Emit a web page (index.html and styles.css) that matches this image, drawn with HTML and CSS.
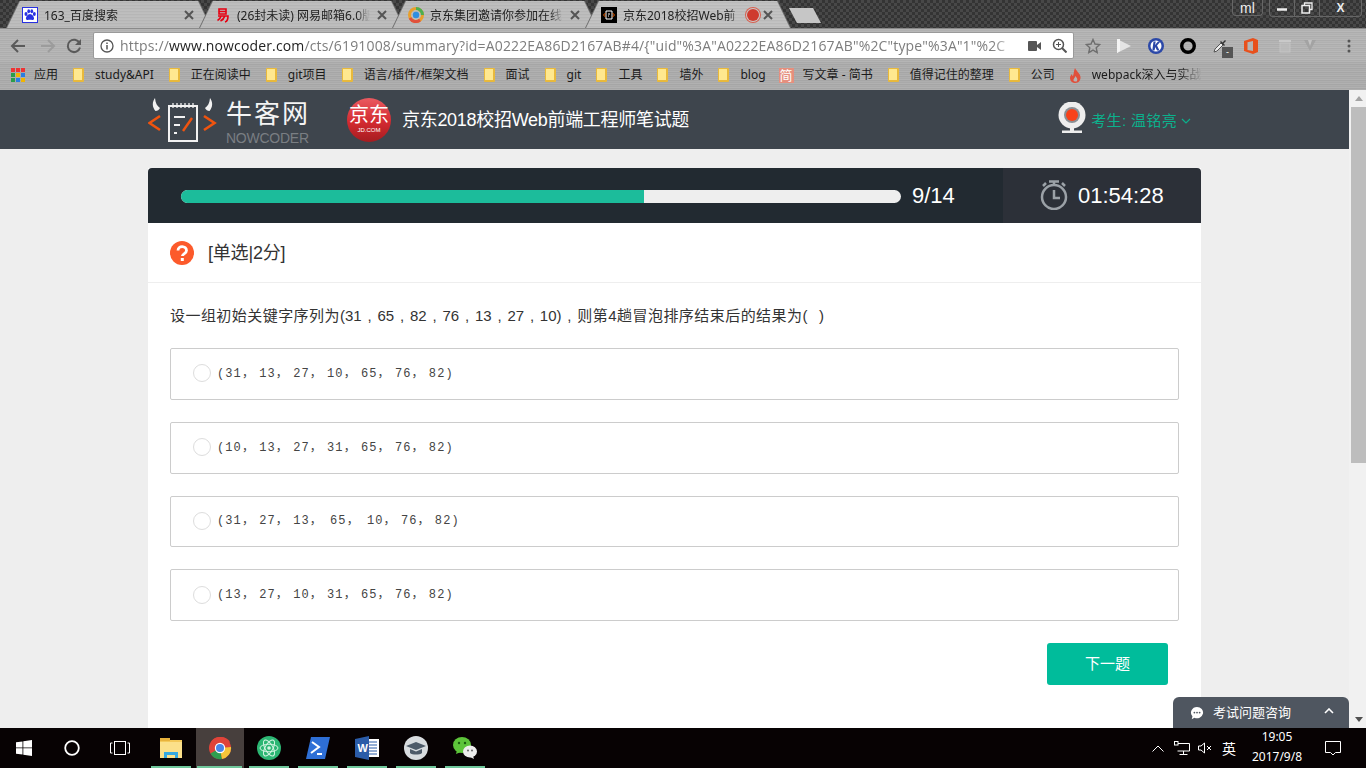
FILE: index.html
```html
<!DOCTYPE html>
<html lang="zh-CN">
<head>
<meta charset="utf-8">
<title>京东2018校招Web前端工程师笔试题</title>
<link rel="stylesheet" href="styles.css">
</head>
<body>
<div class="strip">
  <div class="tab"><div class="tab-in">
    <svg class="fav" viewBox="0 0 16 16"><rect x=".5" y=".5" width="15" height="15" fill="#fff" stroke="#2932e1"/><g fill="#2932e1"><ellipse cx="4" cy="7" rx="1.5" ry="2"/><ellipse cx="6.7" cy="4.3" rx="1.4" ry="2"/><ellipse cx="9.8" cy="4.3" rx="1.4" ry="2"/><ellipse cx="12.3" cy="7" rx="1.5" ry="2"/><path d="M8 7c2 0 4.500 3 4 5-.5 1.500-2.500.8-4 .8s-3.500.7-4-.8c-.5-2 2-5 4-5z"/></g></svg>
    <span class="tab-text">163_百度搜索</span>
    <svg class="tab-x" viewBox="0 0 10 10"><path d="M1 1l8 8M9 1l-8 8" stroke="#555" stroke-width="2"/></svg>
  </div></div>
  <div class="tab"><div class="tab-in">
    <svg class="fav" viewBox="0 0 16 16"><g fill="none" stroke="#e60012" stroke-width="1.600"><path d="M4 2h7v5H4zM4 4.500h7M3 9h10c0 3-1 5.500-3 6M6 9c-.5 2-1.500 3.500-3.500 4.500M9.500 9.500c-.5 2-2 3.500-4 4.500"/></g></svg>
    <span class="tab-text">(26封未读) 网易邮箱6.0版</span>
    <svg class="tab-x" viewBox="0 0 10 10"><path d="M1 1l8 8M9 1l-8 8" stroke="#555" stroke-width="2"/></svg>
  </div></div>
  <div class="tab"><div class="tab-in">
    <svg class="fav" viewBox="0 0 16 16"><circle cx="8" cy="8" r="6.500" fill="none" stroke="#e8a02c" stroke-width="3"/><path d="M8 1.500A6.500 6.500 0 0 1 14.500 8" fill="none" stroke="#4caf50" stroke-width="3"/><path d="M2 11a6.500 6.500 0 0 0 10 2" fill="none" stroke="#e0503c" stroke-width="3"/><circle cx="8" cy="8" r="3.200" fill="#2f8fe0"/></svg>
    <span class="tab-text">京东集团邀请你参加在线</span>
    <svg class="tab-x" viewBox="0 0 10 10"><path d="M1 1l8 8M9 1l-8 8" stroke="#555" stroke-width="2"/></svg>
  </div></div>
  <div class="tab tab-active"><div class="tab-in">
    <svg class="fav" viewBox="0 0 16 16"><rect width="16" height="16"/><path d="M5 4h6v8H5z" fill="none" stroke="#fff"/><path d="M2.500 8l2-2M2.500 8l2 2M13.500 8l-2-2M13.500 8l-2 2" stroke="#f60" fill="none"/><path d="M7 7h2M7 9h1" stroke="#fff"/></svg>
    <span class="tab-text">京东2018校招Web前</span>
    <span class="rec"></span>
    <svg class="tab-x" viewBox="0 0 10 10"><path d="M1 1l8 8M9 1l-8 8" stroke="#555" stroke-width="2"/></svg>
  </div></div>
  <div class="new-tab"></div>
  <div class="win">
    <span class="win-user">ml</span>
    <span class="win-btns">
      <span class="win-b"><svg viewBox="0 0 12 12" width="12" height="12"><path d="M1 7.500h10" stroke="#eee" stroke-width="2.500"/></svg></span>
      <span class="win-b"><svg viewBox="0 0 12 12" width="12" height="12"><path d="M3.500 3V1h7.500v6.500H9" fill="none" stroke="#eee" stroke-width="1.300"/><rect x="1" y="3.500" width="7.500" height="7.500" fill="none" stroke="#eee" stroke-width="1.500"/></svg></span>
      <span class="win-b win-close">X</span>
    </span>
  </div>
</div>

<div class="toolbar">
  <svg class="nav" viewBox="0 0 16 16"><path d="M15 8H2M8 2L2 8l6 6" fill="none" stroke="#5a5a5a" stroke-width="2"/></svg>
  <svg class="nav nav-off" viewBox="0 0 16 16"><path d="M1 8h13M8 2l6 6-6 6" fill="none" stroke="#9c9c9c" stroke-width="2"/></svg>
  <svg class="nav" viewBox="0 0 16 16"><path d="M13.500 5A6.200 6.200 0 1 0 14 9.500" fill="none" stroke="#5a5a5a" stroke-width="2"/><path d="M15 1v6H9z" fill="#5a5a5a"/></svg>
  <div class="omni">
    <svg class="omni-info" viewBox="0 0 14 14"><circle cx="7" cy="7" r="6" fill="none" stroke="#555" stroke-width="1.300"/><path d="M7 6v4.500M7 3.500v1.500" stroke="#555" stroke-width="1.500"/></svg>
    <span class="url"><span class="url-dim">https://</span><span class="url-host">www.nowcoder.com</span><span class="url-dim">/cts/6191008/summary?id=A0222EA86D2167AB#4/{"uid"%3A"A0222EA86D2167AB"%2C"type"%3A"1"%2C</span></span>
    <svg class="omni-cam" viewBox="0 0 13 10"><rect width="9" height="10" rx="1" fill="#555"/><path d="M9 4l4-3v8L9 6z" fill="#555"/></svg>
    <svg class="omni-zoom" viewBox="0 0 15 15"><circle cx="6.500" cy="6.500" r="5" fill="none" stroke="#555" stroke-width="1.500"/><path d="M10 10l4.500 4.500" stroke="#555" stroke-width="2"/><path d="M4 6.500h5M6.500 4v5" stroke="#555"/></svg>
  </div>
  <div class="ext">
    <svg class="e-star" viewBox="0 0 16 16"><path d="M8 1.500l2 4.500 4.800.5-3.600 3.200 1 4.800L8 12.100l-4.200 2.400 1-4.800L1.200 6.500 6 6z" fill="none" stroke="#6e6e6e" stroke-width="1.400"/></svg>
    <svg class="e-16" viewBox="0 0 16 16"><path d="M1 1l14 7-14 7z" fill="#e4e4e4"/><path d="M1 1h3v12l-3 2z" fill="#f4f4f4"/></svg>
    <svg class="e-16" viewBox="0 0 16 16"><circle cx="8" cy="8" r="8" fill="#2b48a8"/><circle cx="8" cy="8" r="5.500" fill="#fff"/><path d="M5.500 3.500h2.200L7 7l3-3.500h2.500L9 7.500l2.500 5H9L7.300 9l-.8 3.500H4.300z" fill="#2b48a8"/></svg>
    <svg class="e-16" viewBox="0 0 16 16"><circle cx="8" cy="8" r="6.300" fill="none" stroke="#000" stroke-width="3.400"/></svg>
    <span class="e-drop"><svg class="e-16" viewBox="0 0 16 16"><path d="M2 14l1-3 6-6 2 2-6 6z" fill="#eee" stroke="#555"/><path d="M9 3l1.500 1.500L13 2l1 1-2.500 2.500L13 7l-1 1-4-4z" fill="#333"/></svg><span class="badge">-</span></span>
    <svg class="e-off" viewBox="0 0 14 16"><path d="M0 3l9-3 5 2v12l-5 2-9-3z" fill="#e8501c"/><path d="M3.500 4.200L9 3v10l-5.500-1z" fill="#b4b4b4"/></svg>
    <svg class="e-16 e-dim" viewBox="0 0 16 16"><rect x="2" y="2" width="12" height="2" fill="#d0d0d0"/><rect x="3" y="5" width="10" height="9" fill="#bdbdbd" stroke="#c8c8c8"/></svg>
    <svg class="e-16 e-dim" viewBox="0 0 16 16"><path d="M2 2h12L8 13z" fill="#a0a0a0"/><path d="M6 2h4L8 8z" fill="#c8c8c8"/></svg>
    <svg class="e-menu" viewBox="0 0 4 14"><circle cx="2" cy="2" r="1.500" fill="#555"/><circle cx="2" cy="7" r="1.500" fill="#555"/><circle cx="2" cy="12" r="1.500" fill="#555"/></svg>
  </div>
</div>

<div class="bookmarks">
  <span class="bm"><svg class="bm-apps" viewBox="0 0 14 14"><g><rect width="4" height="4" fill="#e33"/><rect x="5" width="4" height="4" fill="#e33"/><rect x="10" width="4" height="4" fill="#e33"/><rect y="5" width="4" height="4" fill="#2a9d4b"/><rect x="5" y="5" width="4" height="4" fill="#f0b400"/><rect x="10" y="5" width="4" height="4" fill="#2b7de0"/><rect y="10" width="4" height="4" fill="#2a9d4b"/><rect x="5" y="10" width="4" height="4" fill="#2b7de0"/><rect x="10" y="10" width="4" height="4" fill="#f0b400"/></g></svg>应用</span>
  <span class="bm"><span class="folder"></span>study&amp;API</span>
  <span class="bm"><span class="folder"></span>正在阅读中</span>
  <span class="bm"><span class="folder"></span>git项目</span>
  <span class="bm"><span class="folder"></span>语言/插件/框架文档</span>
  <span class="bm"><span class="folder"></span>面试</span>
  <span class="bm"><span class="folder"></span>git</span>
  <span class="bm"><span class="folder"></span>工具</span>
  <span class="bm"><span class="folder"></span>墙外</span>
  <span class="bm"><span class="folder"></span>blog</span>
  <span class="bm bm-js"><span class="jian">简</span>写文章 - 简书</span>
  <span class="bm"><span class="folder"></span>值得记住的整理</span>
  <span class="bm"><span class="folder"></span>公司</span>
  <span class="bm"><svg class="bm-flame" viewBox="0 0 11 15"><path d="M5 0c1 3 5 5 5.500 9 .3 3-2 6-5 6s-5.500-2-5.500-5c0-2 1-3 2-4 0 1 .5 2 1 2C4 6 3.500 3 5 0z" fill="#e0503c"/><path d="M5.500 8c1 1.500 2.500 3 1.500 5-.5.800-3 .8-3.500-.5C3 11 5 10 5.500 8z" fill="#b4b4b4"/></svg><span class="bm-fade">webpack深入与实战</span></span>
</div>

<div class="main">
  <div class="page">
    <header class="site">
      <div class="site-in">
        <svg class="logo" viewBox="0 0 70 50"><path d="M12 19L1.500 26 12 33M56 19l10.500 7L56 33" fill="none" stroke="#f0540f" stroke-width="2.600"/><path d="M7 1C4 5 4 10 7.500 14c2 0 3.500-1 4.500-3C9 9 7.500 6 7 1zM62 1c3 4 3 9-.5 13-2 0-3.500-1-4.500-3 3-2 4.500-5 5-10z" fill="#f2f2f2"/><rect x="21" y="9" width="28" height="35" fill="none" stroke="#f2f2f2" stroke-width="2"/><path d="M25 6v5M29 6v5M33 6v5M37 6v5M41 6v5M45 6v5" stroke="#f2f2f2" stroke-width="1.300"/><path d="M26 20h11M26 28h6M26 36h3" stroke="#f2f2f2" stroke-width="2"/><path d="M35 34l9-13" stroke="#f0540f" stroke-width="2.400"/></svg>
        <div class="brand"><span class="brand-cn">牛客网</span><span class="brand-en">NOWCODER</span></div>
        <div class="jd"><span class="jd-cn">京东</span><span class="jd-en">JD.COM</span></div>
        <h1 class="exam-title">京东2018校招Web前端工程师笔试题</h1>
        <div class="user">
          <svg class="cam" viewBox="0 0 28 32"><circle cx="14" cy="13" r="13.500" fill="#eee"/><circle cx="14" cy="13" r="8" fill="#8a8f94"/><circle cx="14" cy="13" r="6" fill="#f8421a"/><path d="M14 25v4" stroke="#eee" stroke-width="4"/><rect x="4" y="28.500" width="20" height="2.500" fill="#eee"/></svg>
          <span class="user-name">考生: 温铭亮</span>
          <svg class="chev" viewBox="0 0 10 6"><path d="M1 1l4 4 4-4" fill="none" stroke="#0cb08c" stroke-width="1.200"/></svg>
        </div>
      </div>
    </header>

    <section class="card">
      <div class="card-top">
        <div class="prog-wrap">
          <div class="prog"><div class="prog-fill"></div></div>
          <span class="prog-num">9/14</span>
        </div>
        <div class="timer">
          <svg class="clock" viewBox="0 0 28 30"><circle cx="14" cy="17" r="12" fill="none" stroke="#9ba1a7" stroke-width="2.500"/><path d="M14 10v8h6" fill="none" stroke="#9ba1a7" stroke-width="2.500"/><path d="M9 1.500h10M14 1.500v4M3 6l3-3M25 6l-3-3" stroke="#9ba1a7" stroke-width="2.500"/></svg>
          <span class="time">01:54:28</span>
        </div>
      </div>
      <div class="q-head">
        <svg class="q-icon" viewBox="0 0 24 24"><circle cx="12" cy="12" r="12" fill="#fc5a2b"/><path d="M8 9.500c0-5.500 8.500-5 8.500 0 0 3-4 3-4 5.500" fill="none" stroke="#fff" stroke-width="2.800"/><rect x="10.800" y="17" width="3" height="3" fill="#fff"/></svg>
        <span class="q-type">[单选|2分]</span>
      </div>
      <p class="q-text"><span class="cn">设一组初始关键字序列为</span>(31 , 65 , 82 , 76 , 13 , 27 , 10) , <span class="cn">则第4趟冒泡排序结束后的结果为</span>(&nbsp;&nbsp;)</p>
      <div class="opts">
        <div class="opt"><span class="radio"></span><span class="opt-text">(31<i>，</i>13<i>，</i>27<i>，</i>10<i>，</i>65<i>，</i>76<i>，</i>82)</span></div>
        <div class="opt"><span class="radio"></span><span class="opt-text">(10<i>，</i>13<i>，</i>27<i>，</i>31<i>，</i>65<i>，</i>76<i>，</i>82)</span></div>
        <div class="opt"><span class="radio"></span><span class="opt-text">(31<i>，</i>27<i>，</i>13<i class="wide">，</i>65<i class="wide">，</i>10<i>，</i>76<i>，</i>82)</span></div>
        <div class="opt"><span class="radio"></span><span class="opt-text">(13<i>，</i>27<i>，</i>10<i>，</i>31<i>，</i>65<i>，</i>76<i>，</i>82)</span></div>
      </div>
      <div class="actions"><button class="next"><span class="next-label">下一题</span></button></div>
    </section>
  </div>
  <div class="scrollbar">
    <span class="sb-up"></span>
    <span class="sb-thumb"></span>
    <span class="sb-track"></span>
    <span class="sb-down"></span>
  </div>
  <div class="consult">
    <svg class="consult-ic" viewBox="0 0 16 16"><path d="M8 1a7 6.500 0 1 1-3 12.400L2 15l.8-3.300A7 6.500 0 0 1 8 1z" fill="#fff"/><circle cx="5" cy="7.500" r="1" fill="#4f5660"/><circle cx="8" cy="7.500" r="1" fill="#4f5660"/><circle cx="11" cy="7.500" r="1" fill="#4f5660"/></svg>
    <span class="consult-text">考试问题咨询</span>
    <svg class="consult-up" viewBox="0 0 10 6"><path d="M1 5l4-4 4 4" fill="none" stroke="#fff" stroke-width="1.600"/></svg>
  </div>
</div>

<footer class="taskbar">
  <div class="tb-sys"><svg class="ic-win" viewBox="0 0 16 16"><path d="M0 2.300L6.500 1.400V7.500H0zM7.300 1.300L16 0V7.500H7.300zM0 8.300H6.500V14.500L0 13.700zM7.300 8.300H16V16L7.300 14.700z" fill="#fff"/></svg></div>
  <div class="tb-sys"><svg class="ic-16" viewBox="0 0 16 16"><circle cx="8" cy="8" r="6.800" fill="none" stroke="#fff" stroke-width="1.800"/></svg></div>
  <div class="tb-sys"><svg class="ic-view" viewBox="0 0 20 14"><rect x="4.500" y=".5" width="11" height="13" fill="none" stroke="#fff"/><path d="M2.500 2H.5v10h2M17.500 2h2v10h-2" fill="none" stroke="#fff"/></svg></div>
  <div class="tb-apps">
    <div class="tb-app"><svg class="ic-app" viewBox="0 0 24 22"><path d="M1 1h8l2 2h12v18H1z" fill="#f3c95a"/><rect x="1" y="5" width="22" height="16" fill="#fbe08a"/><rect x="1" y="1" width="10" height="3" fill="#e8b23c"/><path d="M5 21v-6h14v6h-3v-3H8v3z" fill="#35a8e0"/></svg></div>
    <div class="tb-app tb-on"><svg class="ic-app" viewBox="0 0 24 24"><circle cx="12" cy="12" r="11" fill="#e0443a"/><path d="M12 12L2.500 17.500A11 11 0 0 0 14 23z" fill="#2f9e4f"/><path d="M12 12l11-1a11 11 0 0 1-9 12z" fill="#f5c53a"/><path d="M12 6.500h10.300A11 11 0 0 0 12 1 11 11 0 0 0 3 6l4.500 8z" fill="#e0443a"/><circle cx="12" cy="12" r="5.200" fill="#fff"/><circle cx="12" cy="12" r="4" fill="#4a86e8"/></svg></div>
    <div class="tb-app"><svg class="ic-app" viewBox="0 0 24 24"><circle cx="12" cy="12" r="12" fill="#2cb673"/><g fill="none" stroke="#d5f5e3" stroke-width="1"><ellipse cx="12" cy="12" rx="9" ry="3.800" transform="rotate(60 12 12)"/><ellipse cx="12" cy="12" rx="9" ry="3.800" transform="rotate(-60 12 12)"/><ellipse cx="12" cy="12" rx="9" ry="3.800" transform="rotate(0 12 12)"/></g><circle cx="12" cy="12" r="1.800" fill="#d5f5e3"/></svg></div>
    <div class="tb-app"><svg class="ic-app" viewBox="0 0 24 22"><path d="M5 0h19l-5 22H0z" fill="#2e6fd6"/><path d="M6 5l7 5-8 6" fill="none" stroke="#fff" stroke-width="2"/><path d="M11 17h5" stroke="#fff" stroke-width="2"/></svg></div>
    <div class="tb-app"><svg class="ic-app" viewBox="0 0 24 24"><rect x="10" y="3" width="14" height="18" fill="#fff"/><path d="M13 6h9M13 9h9M13 12h9M13 15h9M13 18h9" stroke="#2b5ca8"/><path d="M0 3l14-3v24L0 21z" fill="#2b5ca8"/><text class="word-w" x="2.500" y="16">W</text></svg></div>
    <div class="tb-app"><svg class="ic-app" viewBox="0 0 24 24"><circle cx="12" cy="12" r="12" fill="#d8dcdf"/><path d="M2 10l10-4 10 4-10 4z" fill="#4d5a68"/><path d="M6 13v4c2 2 10 2 12 0v-4l-6 2.500z" fill="#4d5a68"/></svg></div>
    <div class="tb-app"><svg class="ic-app" viewBox="0 0 24 22"><ellipse cx="9" cy="8" rx="9" ry="8" fill="#5dc43a"/><path d="M4 13l-1 4 5-2z" fill="#5dc43a"/><circle cx="6" cy="6" r="1.200" fill="#1a5e10"/><circle cx="12" cy="6" r="1.200" fill="#1a5e10"/><ellipse cx="17" cy="14.500" rx="7" ry="6" fill="#eee"/><path d="M20 19l1 3-4-2z" fill="#eee"/><circle cx="15" cy="13.500" r="1" fill="#666"/><circle cx="19" cy="13.500" r="1" fill="#666"/></svg></div>
  </div>
  <div class="tray">
    <svg class="tr-chev" viewBox="0 0 12 7"><path d="M.5 6.500L6 1l5.500 5.500" fill="none" stroke="#fff"/></svg>
    <svg class="tr-net" viewBox="0 0 16 14"><path d="M3.500 2.500H15.500V10H3.500M9.500 10V13M5.500 13.500h8" fill="none" stroke="#fff"/><rect x=".5" y=".5" width="3.500" height="3.500" fill="#000" stroke="#fff"/></svg>
    <svg class="tr-vol" viewBox="0 0 14 12"><path d="M.5 4v4h2.500L6.500 11V1L3 4z" fill="none" stroke="#fff"/><path d="M9 4l4 4M13 4l-4 4" stroke="#fff"/></svg>
    <span class="tr-ime">英</span>
    <span class="tr-time"><span>19:05</span><span>2017/9/8</span></span>
    <svg class="tr-note" viewBox="0 0 16 15"><path d="M.5.5h15v11h-5L8 14l-2.500-2.500h-5z" fill="none" stroke="#fff"/></svg>
  </div>
</footer>
</body>
</html>
```

FILE: styles.css
```css
* { box-sizing: border-box; }
html, body { margin: 0; padding: 0; width: 1366px; height: 768px; overflow: hidden; }
body {
  display: flex; flex-direction: column;
  font-family: "Liberation Sans", "Noto Sans CJK SC", sans-serif;
  background: #eee;
}
svg { display: block; flex: none; }

/* tab strip */
.strip {
  height: 29px; flex: none; display: flex; padding: 1px 0 0 7px;
  background-color: #3c3c3c;
  background-image: conic-gradient(#484848 25%, #343434 0 50%, #484848 0 75%, #343434 0);
  background-size: 6px 6px;
  border-bottom: 1px solid #8a8a8a;
}
.tab { width: 204px; height: 27px; margin-right: -11px; flex: none; filter: drop-shadow(-1px 0 0 #6e6e6e) drop-shadow(1px 0 0 #6e6e6e); }
.tab-in {
  height: 100%; display: flex; align-items: center; padding: 0 15px;
  clip-path: polygon(0 100%, 13px 0, calc(100% - 13px) 0, 100% 100%);
  background: repeating-linear-gradient(0deg, #bcbcbc 0 1px, #b6b6b6 1px 2px, #bebebe 2px 3px);
  font-family: "Noto Sans", "Noto Sans CJK SC", sans-serif;
  font-size: 12px; color: #222;
}
.tab-active .tab-in { background: repeating-linear-gradient(0deg, #c0c0c0 0 1px, #bababa 1px 2px, #c3c3c3 2px 3px); }
.fav { width: 16px; height: 16px; margin-right: 6px; }
.tab-text {
  flex: 1; white-space: nowrap; overflow: hidden;
  -webkit-mask-image: linear-gradient(90deg, #000 90%, transparent);
  mask-image: linear-gradient(90deg, #000 90%, transparent);
}
.tab-x { width: 10px; height: 10px; margin: 0 2px 0 7px; }
.rec { width: 12px; height: 12px; margin-left: 6px; border-radius: 50%; background: #cf3b2e; box-shadow: 0 0 0 1px #c9c9c9, 0 0 0 2px #d8604f; flex: none; }
.tab-active .tab-x { margin-left: 4px; }
.new-tab {
  width: 32px; height: 15px; margin: 7px 0 0 10px; flex: none;
  background: #c6c6c6; clip-path: polygon(0 0, 24px 0, 100% 100%, 8px 100%);
}
.win { margin-left: auto; display: flex; align-items: flex-start; gap: 6px; margin-top: -1px; padding-right: 4px; }
.win-user, .win-b { height: 16px; display: flex; align-items: center; justify-content: center; color: #eee; }
.win-user { width: 31px; font-size: 14px; padding-top: 1px; border: 1px solid #666; border-top: 0; border-radius: 0 0 4px 4px; }
.win-btns { display: flex; border: 1px solid #666; border-top: 0; border-radius: 0 0 4px 4px; }
.win-b { width: 25px; border-right: 1px solid #666; }
.win-close { width: 41px; border-right: 0; font-size: 12px; font-weight: 700; }

/* toolbar */
.toolbar {
  height: 33px; flex: none; display: flex; align-items: center; padding: 0 0 0 10px;
  background: repeating-linear-gradient(0deg, #b5b5b5 0 1px, #adadad 1px 2px, #b8b8b8 2px 3px, #b0b0b0 3px 4px);
}
.nav { width: 16px; height: 16px; margin-right: 10px; }
.nav-off { margin-right: 10px; margin-left: 4px; }
.nav + .nav-off + .nav { margin-right: 11px; }
.omni {
  width: 981px; height: 27px; flex: none; display: flex; align-items: center; padding: 0 6px;
  background: #fff; border: 1px solid #9a9a9a; border-radius: 2px;
}
.omni-info { width: 14px; height: 14px; margin-right: 6px; }
.url {
  width: 901px; white-space: nowrap; overflow: hidden;
  font-family: "Open Sans", sans-serif; font-size: 14px; letter-spacing: .15px;
  -webkit-mask-image: linear-gradient(90deg, #000 97%, transparent);
  mask-image: linear-gradient(90deg, #000 97%, transparent);
}
.url-dim { color: #7d7d7d; }
.url-host { color: #222; }
.omni-cam { width: 13px; height: 10px; margin-left: 9px; }
.omni-zoom { width: 15px; height: 15px; margin-left: 11px; }
.ext { display: flex; align-items: center; padding-left: 11px; }
.e-star { width: 16px; height: 16px; margin-right: 15px; }
.e-16 { width: 16px; height: 16px; margin-right: 16px; }
.e-drop { display: flex; position: relative; }
.badge {
  position: absolute; left: 10px; top: 9px; width: 11px; height: 11px;
  background: #555; color: #fff; font-size: 9px; line-height: 10px; text-align: center;
}
.e-off { width: 14px; height: 16px; margin-right: 19px; }
.e-dim { opacity: .8; margin-right: 9px; }
.e-dim + .e-dim { margin-right: 29px; }
.e-menu { width: 4px; height: 14px; }

/* bookmarks */
.bookmarks {
  height: 28px; flex: none; display: flex; align-items: center; gap: 15px; padding: 0 0 2px 11px;
  background: repeating-linear-gradient(0deg, #aeaeae 0 1px, #a6a6a6 1px 2px, #b1b1b1 2px 3px, #a9a9a9 3px 4px);
  font-family: "Noto Sans", "Noto Sans CJK SC", sans-serif; font-size: 12px; color: #1a1a1a; white-space: nowrap;
}
.bm { display: flex; align-items: center; gap: 11px; line-height: 16px; }
.bm-apps { width: 14px; height: 14px; margin-right: -2px; }
.folder { width: 11px; height: 14px; background: #ffe88f; border: 1px solid #e8b93c; border-right-width: 2px; border-bottom-width: 2px; border-radius: 1px; flex: none; }
.jian { width: 15px; height: 15px; background: #e58f7e; color: #fff; font-size: 13px; line-height: 15px; text-align: center; }
.bm-js { gap: 9px; margin-left: -2px; }
.bm-flame { width: 11px; height: 15px; }
.bm-fade {
  -webkit-mask-image: linear-gradient(90deg, #000 80%, transparent);
  mask-image: linear-gradient(90deg, #000 80%, transparent);
}

/* page */
.main { flex: 1; min-height: 0; display: flex; position: relative; overflow: hidden; }
.page { width: 1349px; flex: none; display: flex; flex-direction: column; background: #eee; }
.site { height: 59px; flex: none; background: #3e454d; }
.site-in { width: 1053px; height: 100%; margin: 0 auto; display: flex; align-items: center; }
.logo { width: 70px; height: 50px; margin: 5px 8px 0 0; }
.brand { width: 83px; margin-top: 7px; display: flex; flex-direction: column; }
.brand-cn { font-size: 26px; line-height: 26px; letter-spacing: 2px; white-space: nowrap; color: #f4f4f4; }
.brand-en { margin-top: 4px; font-size: 14px; line-height: 14px; letter-spacing: -.25px; color: #7a7e83; white-space: nowrap; }
.jd {
  width: 44px; height: 44px; margin-left: 38px; border-radius: 50%;
  background: linear-gradient(#ea5a60, #d32a30 55%, #a51c20);
  display: flex; flex-direction: column; align-items: center; justify-content: center; color: #fff; flex: none;
}
.jd-cn { font-size: 20px; line-height: 21px; white-space: nowrap; }
.jd-en { font-size: 6px; line-height: 8px; }
.exam-title { margin: 0 0 3px 11px; font-size: 18px; letter-spacing: -.3px; font-weight: 400; color: #fff; white-space: nowrap; }
.user { margin-left: auto; padding-right: 10px; display: flex; align-items: center; }
.cam { width: 28px; height: 32px; margin-right: 5px; margin-top: -3px; }
.user-name { font-size: 15px; letter-spacing: .35px; color: #0cb08c; white-space: nowrap; margin-bottom: 1px; }
.chev { width: 10px; height: 6px; margin-left: 4px; margin-top: 2px; }

.card { width: 1053px; flex: 1; min-height: 0; margin: 19px auto 0; background: #fff; }
.card-top { height: 55px; display: flex; border-radius: 4px 4px 0 0; overflow: hidden; }
.prog-wrap { width: 855px; background: #222a31; display: flex; align-items: center; padding-left: 33px; }
.prog { width: 720px; height: 13px; margin-top: 1px; border-radius: 7px; background: #eee; overflow: hidden; }
.prog-fill { width: 463px; height: 100%; background: #1cbc9b; }
.prog-num { margin-left: 11px; font-size: 22px; color: #fff; }
.timer { flex: 1; background: #2c3038; display: flex; align-items: center; padding-left: 37px; }
.clock { width: 28px; height: 30px; margin-right: 10px; margin-top: -2px; }
.time { font-size: 22px; color: #fff; }
.q-head { height: 60px; display: flex; align-items: center; padding-left: 22px; border-bottom: 1px solid #eee; }
.q-icon { width: 24px; height: 24px; margin-right: 14px; }
.q-type { font-size: 18px; letter-spacing: -.2px; color: #333; margin-bottom: 3px; }
.q-text { margin: 23px 0 22px 22px; font-size: 15px; line-height: 20px; color: #333; word-spacing: 1.650px; white-space: nowrap; }
.cn { letter-spacing: .45px; }
.opts { margin-left: 22px; width: 1009px; display: flex; flex-direction: column; gap: 22px; }
.opt { height: 51.750px; display: flex; align-items: center; padding-left: 22px; border: 1px solid #ccc; border-radius: 2px; }
.radio { width: 18px; height: 18px; margin: 0 6px 1px 0; border: 1px solid #ddd; border-radius: 50%; flex: none; }
.opt-text { margin-bottom: 4px; font-family: "Liberation Mono", "Noto Sans CJK SC", monospace; font-size: 12px; letter-spacing: 1.100px; color: #444; white-space: nowrap; }
.opt-text i { font-style: normal; letter-spacing: 5.300px; }
.opt-text .wide { letter-spacing: 8.300px; }
.actions { display: flex; justify-content: flex-end; padding: 22px 33px 0 0; }
.next {
  width: 121px; height: 42px; padding: 0 0 3px; border: 0; border-radius: 3px; background: #00bc9b; color: #fff;
  font: 15px "Liberation Sans", "Noto Sans CJK SC", sans-serif;
}

.scrollbar { flex: 1; display: flex; flex-direction: column; align-items: flex-end; background: #f1f1f1; }
.sb-up, .sb-down { width: 15px; height: 17px; display: flex; flex: none; align-items: center; justify-content: center; }
.sb-up::before { content: ""; border: 4px solid transparent; border-top: 0; border-bottom: 5px solid #a3a3a3; }
.sb-down::before { content: ""; border: 4px solid transparent; border-bottom: 0; border-top: 5px solid #505050; }
.sb-thumb { width: 15px; height: 356px; background: #bdbdbd; flex: none; }
.sb-track { flex: 1; }

.consult {
  position: absolute; left: 1173px; bottom: 0; width: 176px; height: 31px;
  display: flex; align-items: center; padding: 0 15px 0 17px;
  background: #4f5660; border-radius: 6px 6px 0 0; color: #fff; font-size: 13px;
}
.consult-ic { width: 14px; height: 14px; margin-right: 9px; }
.consult-text { flex: 1; white-space: nowrap; margin-bottom: 3px; }
.consult-up { width: 10px; height: 6px; margin-bottom: 3px; }

/* taskbar */
.taskbar {
  height: 40px; flex: none; display: flex; align-items: center; background: #070203; color: #fff;
}
.tb-sys { width: 48px; height: 100%; display: flex; align-items: center; justify-content: center; }
.ic-win, .ic-16 { width: 16px; height: 16px; }
.ic-view { width: 20px; height: 14px; }
.tb-apps { display: flex; height: 100%; margin-left: 2px; }
.tb-app {
  width: 49px; height: 100%; display: flex; align-items: center; justify-content: center;
  background: linear-gradient(#6fc79b, #6fc79b) bottom center / 40px 2px no-repeat;
}
.tb-on {
  background: linear-gradient(#6fc79b, #6fc79b) bottom center / 45px 2px no-repeat,
    linear-gradient(#473f3d, #473f3d) center / 48px 100% no-repeat;
}
.ic-app { width: 24px; height: 24px; }
.word-w { font: 700 11px "Liberation Sans", sans-serif; fill: #fff; }
.tray { margin-left: auto; height: 100%; display: flex; align-items: center; padding-right: 25px; }
.tr-chev { width: 12px; height: 7px; margin-right: 10px; }
.tr-net { width: 16px; height: 14px; margin-right: 8px; }
.tr-vol { width: 14px; height: 12px; margin-right: 11px; }
.tr-ime { font-family: "Noto Sans CJK SC", sans-serif; font-size: 14px; width: 14px; line-height: 14px; margin-left: -1px; margin-right: 1px; }
.tr-time { width: 80px; display: flex; flex-direction: column; align-items: center; gap: 4px; font-family: "Noto Sans", sans-serif; font-size: 12px; line-height: 16px; margin: 0 8px 2px 0; }
.tr-note { width: 16px; height: 15px; }
```
